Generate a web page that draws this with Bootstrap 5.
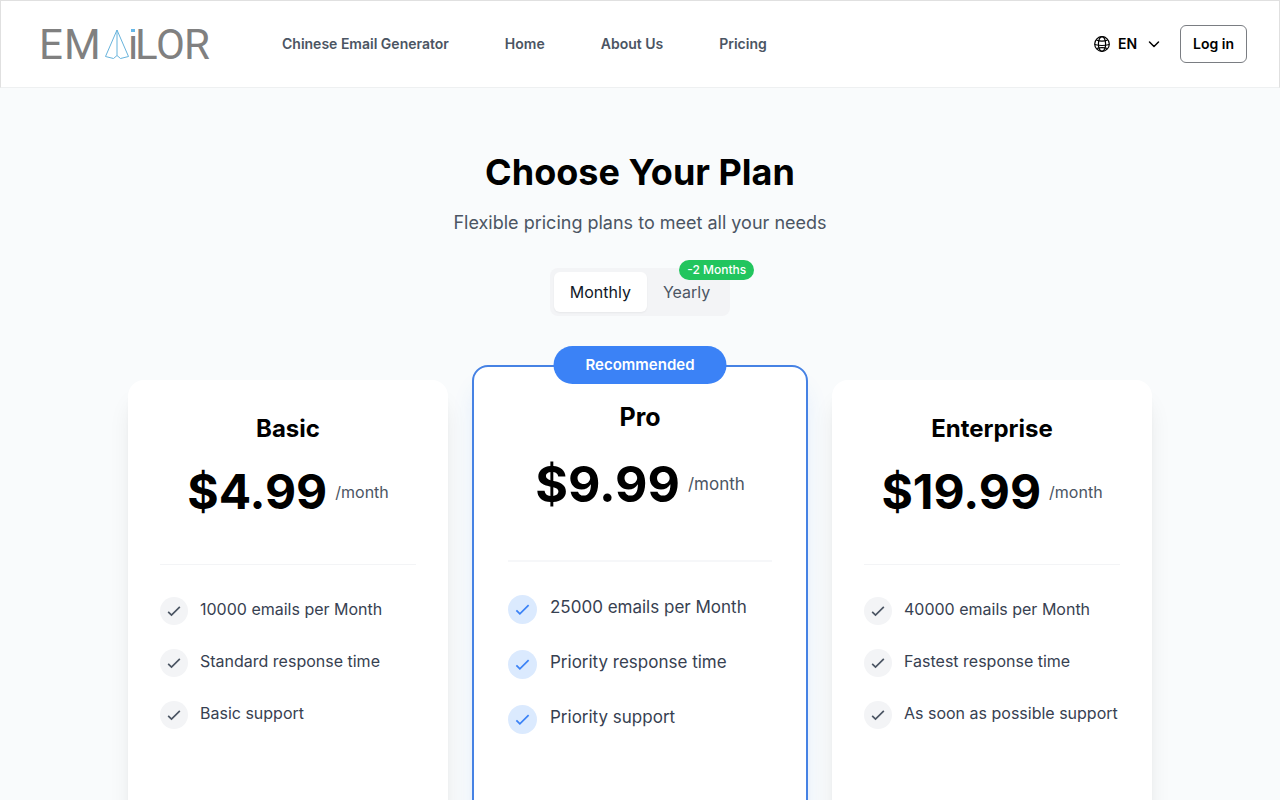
<!DOCTYPE html>
<html lang="en">
<head>
<meta charset="utf-8">
<meta name="viewport" content="width=device-width, initial-scale=1">
<title>Emailor – Pricing</title>
<link href="https://cdn.jsdelivr.net/npm/bootstrap@5.3.0/dist/css/bootstrap.min.css" rel="stylesheet">
<style>
  body { font-family: Inter, "Liberation Sans", sans-serif; background: #f9fbfc; color: #000; min-height: 100vh; }
  .site-header { background: #fff; border: 1px solid #e0e0e0; border-bottom-color: #eef0f1; padding: 16px 32px; }
  .site-nav { gap: 56px; margin-left: 64px; }
  .site-nav a { color: #4b5563; font-size: 14px; line-height: 20px; font-weight: 600; text-decoration: none; }
  .brand-art { font-family: Roboto, sans-serif; font-size: 42px; fill: #808080; }
  .lang { margin-right: 18px; }
  .lang select { appearance: none; border: 0; background: none; padding: 0; font-size: 14px; line-height: 20px; font-weight: 600; color: #000; }
  .btn-login { font-size: 14px; line-height: 20px; font-weight: 600; padding: 8px 12px; border: 1px solid #7a7d82; border-radius: 6px; color: #000; background: #fff; }
  .hero-title { font-size: 36px; line-height: 40px; font-weight: 700; margin-bottom: 16px; }
  .hero-text { font-size: 18px; line-height: 30px; color: #4b5563; margin-bottom: 30px; }
  .period { background: #f3f4f6; border-radius: 8px; padding: 4px; }
  .period button { border: 0; background: none; border-radius: 6px; padding: 8px 16px; font-size: 16px; line-height: 24px; color: #4b5563; }
  .period button.active { background: #fff; color: #111827; box-shadow: 0 1px 2px rgba(0,0,0,.05); }
  .save-tag { top: -8px; right: -24px; background: #22c55e; color: #fff; border-radius: 10px; padding: 2px 8px; font-size: 12px; line-height: 16px; font-weight: 500; white-space: nowrap; }
  .plans { display: grid; grid-template-columns: 20fr 21fr 20fr; gap: 24px; max-width: 1024px; margin: 49px auto 64px; align-items: center; }
  .plan { background: #fff; border-radius: 16px; padding: 32px; min-height: 600px; box-shadow: 0 20px 25px -5px rgba(0,0,0,.1), 0 8px 10px -6px rgba(0,0,0,.1); }
  .plan h2 { font-size: 24px; line-height: 34px; font-weight: 700; margin-bottom: 22px; }
  .price { font-size: 48px; line-height: 48px; font-weight: 700; }
  .per { font-size: 16px; line-height: 24px; color: #4b5563; }
  .plan-head { padding-bottom: 48px; border-bottom: 1px solid #f3f4f6; margin-bottom: 32px; }
  .plan ul { display: grid; gap: 24px; }
  .plan li { gap: 12px; font-size: 16px; line-height: 24px; color: #374151; }
  .tick { background: #f3f4f6; color: #4b5563; width: 28px; height: 28px; border-radius: 50%; flex: none; }
  .plan-pro { min-height: 630px; border: 2px solid #4682e4; padding: 34px; box-shadow: 0 20px 25px -5px rgba(59,130,246,.16), 0 8px 10px -6px rgba(59,130,246,.12); }
  .plan-pro h2 { font-size: 25px; line-height: 32px; margin-bottom: 25px; }
  .plan-pro .price { font-size: 50px; line-height: 52px; }
  .plan-pro .per, .plan-pro li { font-size: 17px; }
  .plan-pro .plan-head { padding-bottom: 50px; border-bottom: 2px solid #f6f7f9; margin-bottom: 33px; }
  .plan-pro ul { gap: 26px; }
  .plan-pro li { gap: 13px; }
  .plan-pro .tick { width: 29px; height: 29px; background: #dbeafe; color: #3b82f6; }
  .ribbon { top: 0; left: 50%; transform: translate(-50%, -21px); background: #3b82f6; color: #fff; border-radius: 19px; padding: 9px 32px; font-size: 15px; line-height: 20px; font-weight: 600; }
  @media (max-width: 991px) {
    .plans { grid-template-columns: 1fr; }
    .site-nav { margin-left: 0; gap: 24px; }
    .site-header { flex-wrap: wrap; gap: 16px; }
  }
</style>
</head>
<body>
<svg class="d-none" aria-hidden="true">
  <symbol id="tick" viewBox="0 0 24 24"><path d="M5 13l4 4L19 7" fill="none" stroke="currentColor" stroke-width="2"/></symbol>
</svg>
<header class="site-header d-flex align-items-center">
  <a href="#" class="d-block" aria-label="Emailor">
    <svg class="brand-art d-block" width="185" height="54" viewBox="0 0 185 54">
      <text x="6 31" y="42">EM</text>
      <g fill="none" stroke="#67b3dc" stroke-width="1" stroke-linejoin="round">
        <path d="M84 13L72.500 39.500L80.500 41.500L84 38.500L87.500 41.500L95.500 39.500Z"/>
        <path d="M84 13V38.500"/>
      </g>
      <text x="95 102 123 151" y="42">iLOR</text>
      <rect x="97" y="10" width="6" height="7" fill="#fff"/>
      <rect x="98" y="12" width="4" height="3" fill="#67b8e8"/>
    </svg>
  </a>
  <nav class="site-nav d-flex flex-wrap">
    <a href="#">Chinese Email Generator</a>
    <a href="#">Home</a>
    <a href="#">About Us</a>
    <a href="#">Pricing</a>
  </nav>
  <div class="d-flex align-items-center ms-auto">
    <label class="lang d-flex align-items-center gap-2">
      <svg width="16" height="16" viewBox="0 0 16 16" fill="none" stroke="#000" stroke-width="1.200" aria-hidden="true"><circle cx="8" cy="8" r="7.300"/><ellipse cx="8" cy="8" rx="3.600" ry="7.300"/><path d="M2.300 4Q8 6.400 13.700 4M.7 8.500Q8 10.500 15.300 8.500M2.500 12.500Q8 10.800 13.500 12.500"/></svg>
      <select aria-label="Language"><option>EN</option></select>
      <svg width="16" height="16" viewBox="0 0 16 16" fill="none" stroke="#000" stroke-width="1.500" stroke-linecap="round" stroke-linejoin="round" aria-hidden="true"><path d="M3.500 6L8 10.500L12.500 6"/></svg>
    </label>
    <button type="button" class="btn-login">Log in</button>
  </div>
</header>
<main class="px-3 pt-5">
  <div class="text-center pt-3">
    <h1 class="hero-title">Choose Your Plan</h1>
    <p class="hero-text">Flexible pricing plans to meet all your needs</p>
    <div class="period d-inline-flex position-relative align-top">
      <button type="button" class="active">Monthly</button>
      <button type="button">Yearly</button>
      <span class="save-tag position-absolute">-2 Months</span>
    </div>
  </div>
  <div class="plans">
    <section class="plan">
      <div class="plan-head text-center">
        <h2>Basic</h2>
        <div class="d-flex justify-content-center align-items-center gap-2"><span class="price">$4.99</span><span class="per">/month</span></div>
      </div>
      <ul class="list-unstyled">
        <li class="d-flex"><span class="tick d-flex align-items-center justify-content-center"><svg width="20" height="20"><use href="#tick"/></svg></span>10000 emails per Month</li>
        <li class="d-flex"><span class="tick d-flex align-items-center justify-content-center"><svg width="20" height="20"><use href="#tick"/></svg></span>Standard response time</li>
        <li class="d-flex"><span class="tick d-flex align-items-center justify-content-center"><svg width="20" height="20"><use href="#tick"/></svg></span>Basic support</li>
      </ul>
    </section>
    <section class="plan plan-pro position-relative">
      <span class="ribbon position-absolute">Recommended</span>
      <div class="plan-head text-center">
        <h2>Pro</h2>
        <div class="d-flex justify-content-center align-items-center gap-2"><span class="price">$9.99</span><span class="per">/month</span></div>
      </div>
      <ul class="list-unstyled">
        <li class="d-flex"><span class="tick d-flex align-items-center justify-content-center"><svg width="21" height="21"><use href="#tick"/></svg></span>25000 emails per Month</li>
        <li class="d-flex"><span class="tick d-flex align-items-center justify-content-center"><svg width="21" height="21"><use href="#tick"/></svg></span>Priority response time</li>
        <li class="d-flex"><span class="tick d-flex align-items-center justify-content-center"><svg width="21" height="21"><use href="#tick"/></svg></span>Priority support</li>
      </ul>
    </section>
    <section class="plan">
      <div class="plan-head text-center">
        <h2>Enterprise</h2>
        <div class="d-flex justify-content-center align-items-center gap-2"><span class="price">$19.99</span><span class="per">/month</span></div>
      </div>
      <ul class="list-unstyled">
        <li class="d-flex"><span class="tick d-flex align-items-center justify-content-center"><svg width="20" height="20"><use href="#tick"/></svg></span>40000 emails per Month</li>
        <li class="d-flex"><span class="tick d-flex align-items-center justify-content-center"><svg width="20" height="20"><use href="#tick"/></svg></span>Fastest response time</li>
        <li class="d-flex"><span class="tick d-flex align-items-center justify-content-center"><svg width="20" height="20"><use href="#tick"/></svg></span>As soon as possible support</li>
      </ul>
    </section>
  </div>
</main>
<script src="https://cdn.jsdelivr.net/npm/bootstrap@5.3.0/dist/js/bootstrap.bundle.min.js"></script>
</body>
</html>
